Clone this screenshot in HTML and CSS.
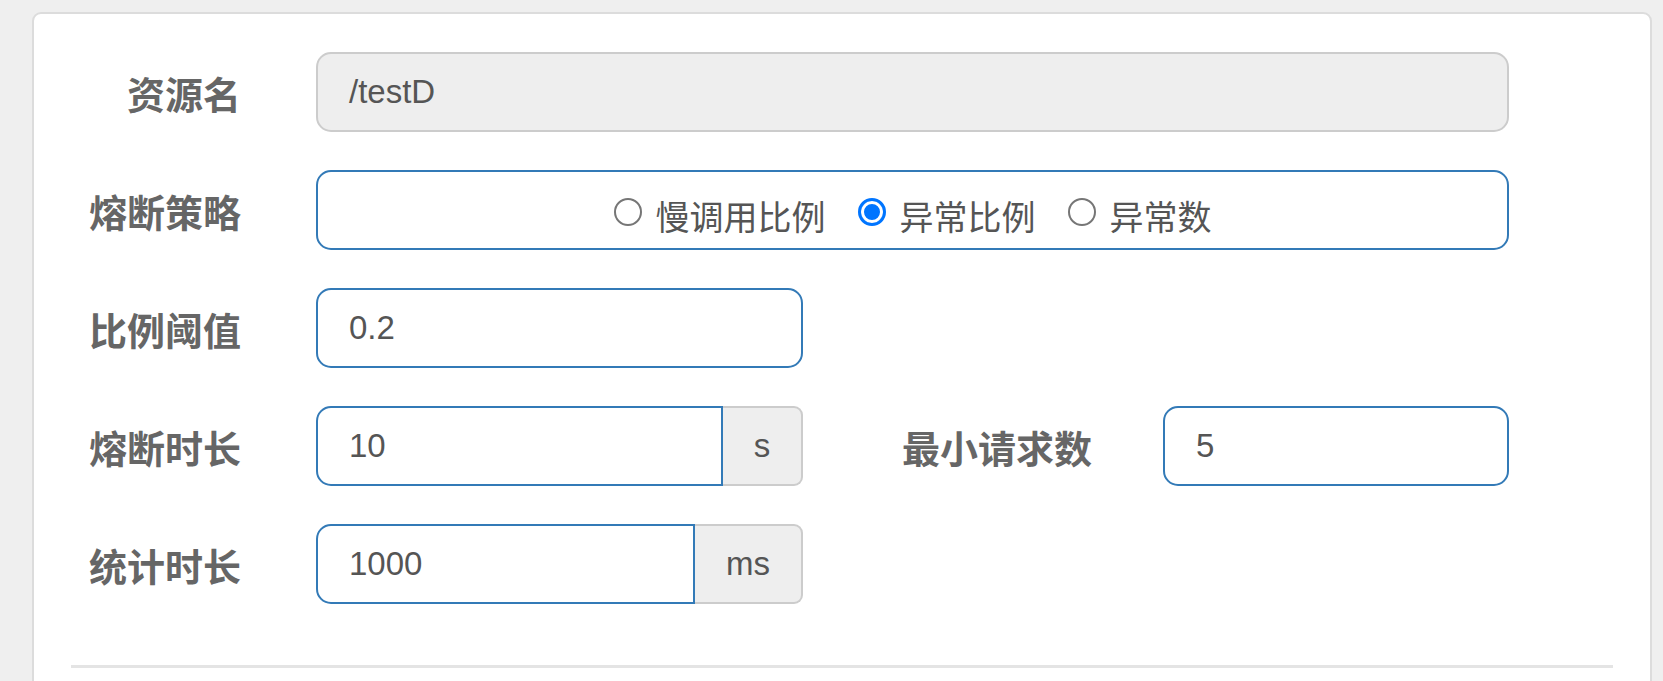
FILE: index.html
```html
<!DOCTYPE html>
<html lang="zh-CN">
<head>
<meta charset="utf-8">
<title>熔断规则</title>
<link rel="stylesheet" href="styles.css">
</head>
<body>
<div class="card">
  <form class="form">
    <div class="row">
      <label class="label">资源名</label>
      <div class="control wide disabled">/testD</div>
    </div>
    <div class="row">
      <label class="label">熔断策略</label>
      <div class="control wide radios">
        <span class="radio"><span class="dot"></span><span class="rtext">慢调用比例</span></span>
        <span class="radio checked"><span class="dot"></span><span class="rtext">异常比例</span></span>
        <span class="radio"><span class="dot"></span><span class="rtext">异常数</span></span>
      </div>
    </div>
    <div class="row">
      <label class="label">比例阈值</label>
      <div class="control half">0.2</div>
    </div>
    <div class="row">
      <label class="label">熔断时长</label>
      <div class="group">
        <div class="control grouped">10</div>
        <div class="addon addon-s">s</div>
      </div>
      <label class="label label2">最小请求数</label>
      <div class="control small">5</div>
    </div>
    <div class="row">
      <label class="label">统计时长</label>
      <div class="group">
        <div class="control grouped">1000</div>
        <div class="addon addon-ms">ms</div>
      </div>
    </div>
  </form>
  <hr class="divider">
</div>
</body>
</html>
```
FILE: styles.css
```css
html, body {
  margin: 0;
  padding: 0;
  background: #efefef;
}
body {
  padding: 12px 0 0 32px;
  font-family: "Liberation Sans", Arial, "Noto Sans CJK SC", sans-serif;
  overflow: hidden;
}
.card {
  width: 1616px;
  background: #fff;
  border: 2px solid #dcdcdc;
  border-radius: 9px;
  padding: 38px 0 60px 0;
}
.form {
  display: flex;
  flex-direction: column;
  gap: 38px;
}
.row {
  display: flex;
  align-items: center;
  height: 80px;
}
.label {
  width: 207px;
  margin-right: 75px;
  text-align: right;
  font-family: "Noto Sans CJK SC", sans-serif;
  font-weight: 700;
  font-size: 38px;
  color: #666;
  white-space: nowrap;
}
.label2 {
  width: 193px;
  margin-left: 96px;
  margin-right: 71px;
}
.control {
  box-sizing: border-box;
  height: 80px;
  border: 2px solid #337ab7;
  border-radius: 15px;
  padding: 0 31px;
  display: flex;
  align-items: center;
  font-size: 33px;
  color: #555;
  background: #fff;
}
.wide { width: 1193px; }
.half { width: 487px; }
.small { width: 346px; }
.disabled {
  background: #eee;
  border-color: #ccc;
}
.group {
  display: flex;
  width: 487px;
}
.grouped {
  flex: 1;
  border-radius: 15px 0 0 15px;
}
.addon {
  box-sizing: border-box;
  height: 80px;
  background: #eee;
  border: 2px solid #ccc;
  border-left: none;
  border-radius: 0 9px 9px 0;
  display: flex;
  align-items: center;
  justify-content: center;
  font-size: 33px;
  color: #555;
}
.addon-s { width: 80px; }
.addon-ms { width: 108px; }
.radios {
  justify-content: center;
  padding: 0;
  font-family: "Noto Sans CJK SC", sans-serif;
}
.radio {
  display: flex;
  align-items: center;
  margin: 0 16px;
}
.dot {
  box-sizing: border-box;
  width: 28px;
  height: 28px;
  border: 2px solid #767676;
  border-radius: 50%;
  margin-right: 14px;
  margin-top: 4px;
  background: #fff;
}
.checked .dot {
  border: 3px solid #0075ff;
  box-shadow: inset 0 0 0 3px #fff, inset 0 0 0 14px #0075ff;
}
.rtext {
  font-size: 34px;
  color: #555;
  line-height: 1;
  margin-top: 12px;
}
.divider {
  margin: 61px 37px 0 37px;
  border: none;
  border-top: 3px solid #e4e4e4;
  height: 0;
}
```
